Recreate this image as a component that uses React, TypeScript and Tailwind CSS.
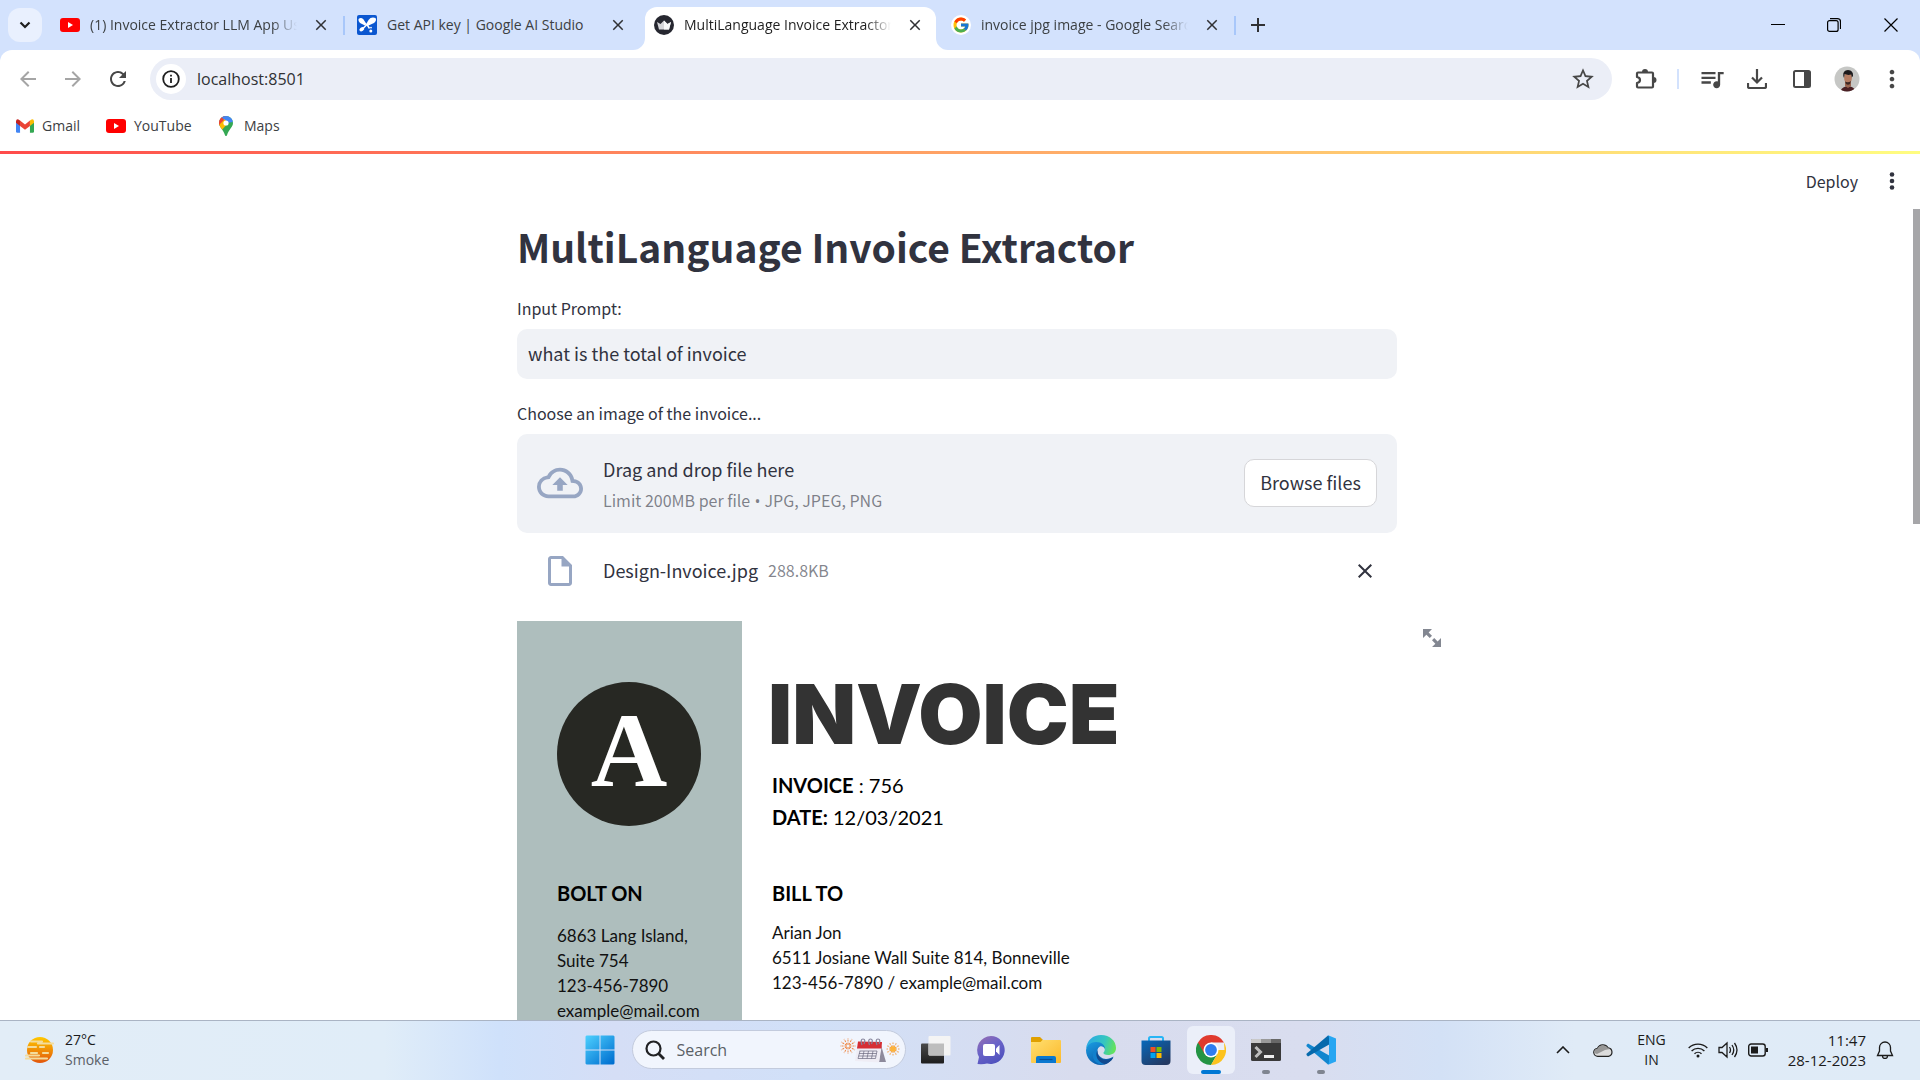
import React from "react";
import {
  MdArrowBack,
  MdArrowForward,
  MdClose,
  MdMoreVert,
  MdOutlineCloudUpload,
  MdOutlineInsertDriveFile,
  MdQueueMusic,
  MdRefresh,
  MdStarBorder,
} from "react-icons/md";
import { FcGoogle } from "react-icons/fc";

const ui = "font-['Open_Sans','Noto_Sans',sans-serif]";
const source = "font-['Noto_Sans_CJK_SC',sans-serif]";

function YouTubeIcon() {
  return (
    <svg viewBox="0 0 20 14" className="h-3.5 w-5 shrink-0" aria-hidden="true">
      <rect width="20" height="14" rx="3" fill="#f00" />
      <path d="M8 4v6l5-3z" fill="#fff" />
    </svg>
  );
}

function StudioIcon() {
  return (
    <svg viewBox="0 0 20 20" className="size-5 shrink-0" aria-hidden="true">
      <rect width="20" height="20" rx="2" fill="#0b57d0" />
      <g fill="#fff">
        <path d="M1.500 4Q4 2 6.500 4.500L9.500 9 8 10.500 3 8Q1 6 1.500 4z" />
        <path d="M18.500 3Q14 1.500 11.500 5L9 9.500l1.500 1.500L17 8Q20 5.500 18.500 3z" />
        <ellipse cx="4.800" cy="14.300" rx="2.600" ry="1.900" transform="rotate(-35 4.800 14.300)" />
        <circle cx="13.800" cy="16" r="1.500" />
        <circle cx="14" cy="12.600" r="0.900" />
      </g>
      <path d="M5 14.500L10 9.500l2.500 4" fill="none" stroke="#fff" strokeWidth="1.500" />
    </svg>
  );
}

function CrownIcon() {
  return (
    <svg viewBox="0 0 20 20" className="size-5 shrink-0" aria-hidden="true">
      <circle cx="10" cy="10" r="10" fill="#262730" />
      <path d="M3 7l3.500 2L10 5.500 13.500 9 17 7l-2 7.500H5z" fill="#d5d5d9" />
      <path d="M10 5.500L13.500 9 17 7l-2 7.500h-5z" fill="#f7f7f8" />
    </svg>
  );
}

function GoogleIcon() {
  return (
    <span className="flex size-5 shrink-0 items-center justify-center rounded-full bg-white">
      <FcGoogle className="size-4.5" />
    </span>
  );
}

const tabs = [
  { title: "(1) Invoice Extractor LLM App Using", icon: <YouTubeIcon />, active: false, line: true },
  { title: "Get API key | Google AI Studio", icon: <StudioIcon />, active: false, line: false },
  { title: "MultiLanguage Invoice Extractor", icon: <CrownIcon />, active: true, line: false },
  { title: "invoice jpg image - Google Search", icon: <GoogleIcon />, active: false, line: true },
];

function TabStrip() {
  return (
    <header className={`flex h-[50px] shrink-0 items-center bg-[#d3e2fd] pl-2 ${ui}`}>
      <button aria-label="Search tabs" className="mr-1.5 flex size-[34px] items-center justify-center rounded-xl bg-[#e9f0fe]">
        <svg viewBox="0 0 12 8" className="h-2 w-3" fill="none" stroke="#1f1f1f" strokeWidth="2.200" aria-hidden="true">
          <path d="M1.500 1.500L6 6l4.500-4.500" />
        </svg>
      </button>
      <div role="tablist" className="flex h-full min-w-0">
        {tabs.map((t) => (
          <div key={t.title} className="relative flex h-full w-[297px] shrink items-center pr-4 pl-3">
            {t.active && (
              <>
                <span className="absolute inset-x-[3px] top-[7px] bottom-0 rounded-t-xl bg-white" />
                <svg viewBox="0 0 12 12" className="absolute bottom-0 -left-[9px] size-3" aria-hidden="true">
                  <path d="M12 0v12H0A12 12 0 0 0 12 0z" fill="#fff" />
                </svg>
                <svg viewBox="0 0 12 12" className="absolute -right-[9px] bottom-0 size-3" aria-hidden="true">
                  <path d="M0 0v12h12A12 12 0 0 1 0 0z" fill="#fff" />
                </svg>
              </>
            )}
            <button role="tab" aria-selected={t.active} className="relative flex min-w-0 flex-1 items-center gap-2.5">
              {t.icon}
              <span
                className={`w-[207px] overflow-hidden text-left text-[14px] leading-5 whitespace-nowrap ${
                  t.title.length > 30 ? "[mask-image:linear-gradient(to_right,black_88%,transparent)]" : ""
                } ${t.active ? "text-[#1f1f1f]" : "text-[#3c4043]"}`}
              >
                {t.title}
              </span>
            </button>
            <button aria-label={`Close ${t.title}`} className="relative ml-3 flex size-4 shrink-0 items-center justify-center text-[#303134]">
              <MdClose className="size-[18px] shrink-0" />
            </button>
            {t.line && <span className="absolute top-4 right-0 h-[19px] w-0.5 bg-[#a8c7fa]" />}
          </div>
        ))}
      </div>
      <button aria-label="New tab" className="ml-2.5 flex size-6 shrink-0 items-center justify-center">
        <svg viewBox="0 0 14 14" className="size-3.5" stroke="#303134" strokeWidth="2" aria-hidden="true">
          <path d="M7 0v14M0 7h14" />
        </svg>
      </button>
      <div className="ml-auto flex h-full shrink-0">
        <button aria-label="Minimize" className="flex w-14 items-center justify-center">
          <svg viewBox="0 0 14 14" className="size-3.5" stroke="#000" aria-hidden="true">
            <path d="M0 6.500h14" />
          </svg>
        </button>
        <button aria-label="Restore" className="flex w-14 items-center justify-center">
          <svg viewBox="0 0 14 14" className="size-3.5" fill="none" stroke="#000" strokeWidth="1.200" aria-hidden="true">
            <rect x="0.600" y="2.600" width="10.500" height="10.800" rx="2" />
            <path d="M3 0.700h7.500a3 3 0 0 1 3 3V11" />
          </svg>
        </button>
        <button aria-label="Close window" className="flex w-[58px] items-center justify-center">
          <svg viewBox="0 0 14 14" className="size-3.5" stroke="#000" strokeWidth="1.200" aria-hidden="true">
            <path d="M.5.5l13 13M13.500.5l-13 13" />
          </svg>
        </button>
      </div>
    </header>
  );
}

function Toolbar() {
  return (
    <div className="bg-[#d3e2fd]">
      <div className={`flex items-center rounded-t-xl bg-white pt-2 pr-3.5 pl-3.5 ${ui}`}>
        <div className="flex gap-[17px] text-[#474747]">
          <button aria-label="Back" className="flex size-7 items-center justify-center text-[#a5a5a5]">
            <MdArrowBack className="size-6" />
          </button>
          <button aria-label="Forward" className="flex size-7 items-center justify-center text-[#a5a5a5]">
            <MdArrowForward className="size-6" />
          </button>
          <button aria-label="Reload" className="flex size-7 items-center justify-center">
            <MdRefresh className="size-6" />
          </button>
        </div>
        <div className="ml-[18px] flex h-[42px] flex-1 items-center rounded-full bg-[#ebeef7] pr-4 pl-1.5">
          <button aria-label="Site information" className="flex size-[30px] items-center justify-center rounded-full bg-white">
            <svg viewBox="0 0 18 18" className="size-[18px]" fill="none" stroke="#1f1f1f" strokeWidth="1.800" aria-hidden="true">
              <circle cx="9" cy="9" r="7.800" />
              <path d="M9 8v5M9 4.800v1.800" />
            </svg>
          </button>
          <input
            aria-label="Address"
            defaultValue="localhost:8501"
            className="ml-[11px] min-w-0 flex-1 bg-transparent text-[16px] text-[#303134] outline-none"
          />
          <button aria-label="Bookmark this tab" className="text-[#474747]">
            <MdStarBorder className="size-[26px]" />
          </button>
        </div>
        <div className="ml-5 flex items-center text-[#474747]">
          <button aria-label="Extensions" className="flex size-7 items-center justify-center">
            <svg viewBox="0 0 22 22" className="size-[22px]" aria-hidden="true">
              <path
                d="M3 4.500h14q1 0 1 1v13q0 1-1 1H3q-1 0-1-1v-3.500q3-.5 3-3t-3-3V5.500q0-1 1-1z"
                fill="none"
                stroke="currentColor"
                strokeWidth="2.200"
                strokeLinejoin="round"
              />
              <path d="M7 4a3 3 0 0 1 6 0zM18.500 9a3 3 0 0 1 0 6z" fill="currentColor" />
            </svg>
          </button>
          <span className="mr-[19px] ml-[17px] h-5 w-0.5 bg-[#d3e2fd]" />
          <div className="flex gap-[17px]">
            <button aria-label="Media controls" className="flex size-7 items-center justify-center">
              <MdQueueMusic className="size-7" />
            </button>
            <button aria-label="Downloads" className="flex size-7 items-center justify-center">
              <svg viewBox="0 0 20 20" className="size-5" fill="none" stroke="currentColor" strokeWidth="2.200" aria-hidden="true">
                <path d="M10 0v13M5 8.500l5 5 5-5M1 14v3.500q0 1.500 1.500 1.500h15q1.500 0 1.500-1.500V14" />
              </svg>
            </button>
            <button aria-label="Side panel" className="flex size-7 items-center justify-center">
              <svg viewBox="0 0 18 18" className="size-[18px]" aria-hidden="true">
                <rect x="1" y="1" width="16" height="16" rx="1.500" fill="none" stroke="currentColor" strokeWidth="2" />
                <path d="M11 1h6v16h-6z" fill="currentColor" />
              </svg>
            </button>
            <button aria-label="Profile" className="flex size-7 items-center justify-center">
              <svg viewBox="0 0 26 26" className="size-[26px]" aria-hidden="true">
                <defs>
                  <clipPath id="avatar">
                    <circle cx="13" cy="13" r="12.500" />
                  </clipPath>
                </defs>
                <g clipPath="url(#avatar)">
                  <rect width="26" height="26" fill="#c6c7c5" />
                  <path d="M6.500 26q0-4 5-5.500h5q5 1.500 5 5.500z" fill="#4a2024" />
                  <path d="M11 15h6v5l-3 2-3-2z" fill="#9a6650" />
                  <ellipse cx="14" cy="12" rx="3.900" ry="6" fill="#b57d63" />
                  <path d="M9.300 10Q8.500 4.500 14 4q5.500.3 5 6l-1.200 1.500-.6-3q-3.400 1-6.500-.4L10 12z" fill="#1c1a1c" />
                  <path d="M11 15.500q3 1.800 6-.5l-1 3q-2 1.500-4 0z" fill="#3c2723" />
                </g>
              </svg>
            </button>
            <button aria-label="Chrome menu" className="flex size-7 items-center justify-center">
              <MdMoreVert className="size-7" />
            </button>
          </div>
        </div>
      </div>
    </div>
  );
}

function GmailIcon() {
  return (
    <svg viewBox="0 0 20 15" className="h-3.5 w-[18px]" aria-hidden="true">
      <path d="M0 2v11.500Q0 15 1.500 15H4.500V5z" fill="#4285f4" />
      <path d="M20 2v11.500q0 1.500-1.500 1.500h-3V5z" fill="#34a853" />
      <path d="M4.500 1.500L10 5.700l5.500-4.200v6L10 11.700 4.500 7.500z" fill="#ea4335" />
      <path d="M0 2.200Q.5-1.200 4 1l.5.400v6L0 4z" fill="#c5221f" />
      <path d="M20 2.200Q19.500-1.200 16 1l-.5.400v6L20 4z" fill="#fbbc04" />
    </svg>
  );
}

function MapsIcon() {
  return (
    <svg viewBox="0 0 14 20" className="h-5 w-3.5" aria-hidden="true">
      <defs>
        <clipPath id="pin">
          <path d="M7 0a7 7 0 0 1 7 7c0 4-4 6-6 12.200Q7 21 6 19.200C4 13 0 11 0 7a7 7 0 0 1 7-7z" />
        </clipPath>
      </defs>
      <g clipPath="url(#pin)">
        <rect width="14" height="20" fill="#34a853" />
        <path d="M0 0h8L0 10z" fill="#ea4335" />
        <path d="M2 1L5-1h9v7L7 7z" fill="#4285f4" />
        <path d="M0 8l5-5 4 4-7 8z" fill="#fbbc04" />
        <path d="M0 0h2l3 4-5 5z" fill="#ea4335" />
      </g>
      <circle cx="7" cy="7" r="2.600" fill="#fff" />
    </svg>
  );
}

function Bookmarks() {
  const link = "flex items-center gap-2";
  return (
    <nav className={`flex h-[51px] shrink-0 items-center bg-white pl-4 text-[14px] text-[#3c4043] ${ui}`}>
      <a href="#gmail" className={`${link} w-[90px]`}>
        <GmailIcon />
        Gmail
      </a>
      <a href="#youtube" className={`${link} w-[113px]`}>
        <YouTubeIcon />
        YouTube
      </a>
      <a href="#maps" className="flex items-center gap-[11px]">
        <MapsIcon />
        Maps
      </a>
    </nav>
  );
}

function InvoiceSheet() {
  return (
    <article className="flex flex-1 font-['Lato',sans-serif] text-[17px] leading-[25px] text-[#111]">
      <section className="w-[225px] shrink-0 bg-[#aebebd] pt-[61px] pl-10">
        <div className="flex size-36 items-center justify-center rounded-full bg-[#272823] pb-1.5 font-['Liberation_Serif',serif] text-[106px] leading-none font-bold text-white">
          A
        </div>
        <h3 className="mt-[53px] text-[20px] leading-7 font-bold text-black">BOLT ON</h3>
        <p className="mt-4 whitespace-nowrap">
          6863 Lang Island,
          <br />
          Suite 754
          <br />
          123-456-7890
          <br />
          example@mail.com
        </p>
      </section>
      <section className="flex-1 bg-white pt-[51px] pl-[30px]">
        <h2 className="-ml-1 font-['Inter',sans-serif] text-[83px] leading-[84px] font-black text-[#333]">INVOICE</h2>
        <p className="mt-[13px] text-[20px] leading-8 text-black">
          <strong>INVOICE</strong> : 756
          <br />
          <strong>DATE:</strong> 12/03/2021
        </p>
        <h3 className="mt-[46px] text-[20px] leading-7 font-bold text-black">BILL TO</h3>
        <p className="mt-[13px]">
          Arian Jon
          <br />
          6511 Josiane Wall Suite 814, Bonneville
          <br />
          123-456-7890 / example@mail.com
        </p>
      </section>
    </article>
  );
}

function StreamlitApp() {
  return (
    <div className={`relative flex min-h-0 flex-1 flex-col overflow-hidden bg-white text-[#31333f] ${source}`}>
      <div className="h-[3px] shrink-0 bg-[linear-gradient(90deg,#ff4b4b,#fffd80)]" />
      <div className="flex h-[53px] shrink-0 items-center justify-end gap-5 pr-3.5">
        <button className="text-[16px] leading-6">Deploy</button>
        <button aria-label="App menu" className="flex size-7 items-center justify-center">
          <svg viewBox="0 0 6 18" className="h-[18px] w-1.5" fill="#31333f" aria-hidden="true">
            <circle cx="3" cy="2.500" r="2.300" />
            <circle cx="3" cy="9" r="2.300" />
            <circle cx="3" cy="15.500" r="2.300" />
          </svg>
        </button>
      </div>
      <main className="flex min-h-0 flex-1 flex-col overflow-hidden pr-1.5">
        <div className="mx-auto flex min-h-0 w-full max-w-[880px] flex-1 flex-col">
          <h1 className="mt-[9px] text-[39px] leading-[60px] font-bold">MultiLanguage Invoice Extractor</h1>
          <label htmlFor="prompt" className="mt-5 text-[16px] leading-6">
            Input Prompt:
          </label>
          <input
            id="prompt"
            defaultValue="what is the total of invoice"
            className="mt-[9px] h-[50px] shrink-0 rounded-[10px] bg-[#f0f2f6] px-[11px] pb-0.5 text-[18px] outline-none"
          />
          <label htmlFor="invoice-file" className="mt-[22px] text-[16px] leading-6">
            Choose an image of the invoice...
          </label>
          <div className="mt-[9px] flex h-[99px] shrink-0 items-center rounded-[10px] bg-[#f0f2f6] px-5 pb-0.5">
            <MdOutlineCloudUpload className="size-[46px] text-[#97a6c3]" />
            <div className="ml-5 flex flex-col pt-[5px]">
              <span className="text-[18px] leading-[30px]">Drag and drop file here</span>
              <small className="text-[16px] leading-8 text-[#31333f]/60">
                Limit 200MB per file<span className="font-['Open_Sans',sans-serif]"> • </span>JPG, JPEG, PNG
              </small>
            </div>
            <input id="invoice-file" type="file" className="sr-only" />
            <button className="ml-auto h-12 w-[133px] rounded-[10px] border border-[#d6d6d9] bg-white text-[18px]">Browse files</button>
          </div>
          <div className="flex h-[88px] shrink-0 items-center px-5 pb-3">
            <span className="flex w-[46px] justify-center">
              <MdOutlineInsertDriveFile className="size-9 text-[#97a6c3]" />
            </span>
            <span className="ml-5 pb-0.5 text-[18px]">Design-Invoice.jpg</span>
            <small className="ml-2.5 pb-0.5 text-[16px] text-[#31333f]/60">288.8KB</small>
            <button aria-label="Remove file" className="ml-auto flex size-6 items-center justify-center">
              <MdClose className="size-6" />
            </button>
          </div>
          <div className="relative flex min-h-0 flex-1">
            <InvoiceSheet />
            <button aria-label="View fullscreen" className="absolute top-2 -right-11 p-0">
              <svg viewBox="0 0 8 8" className="size-[18px]" fill="#838791" aria-hidden="true">
                <path d="M0 0v4l1.500-1.500L3 4l1-1-1.500-1.500L4 0zm5 4L4 5l1.500 1.500L4 8h4V4L6.500 5.500z" />
              </svg>
            </button>
          </div>
        </div>
      </main>
      <span className="absolute top-[58px] right-0 h-[315px] w-[7px] bg-[#a6a6a9]" />
    </div>
  );
}

function WindowsIcon() {
  return (
    <svg viewBox="0 0 30 30" className="size-[30px]" aria-hidden="true">
      <defs>
        <linearGradient id="win" gradientUnits="userSpaceOnUse" x1="0" y1="0" x2="26" y2="30">
          <stop stopColor="#4fd2ff" />
          <stop offset="1" stopColor="#006fd0" />
        </linearGradient>
      </defs>
      <path d="M1.500 0.500h13v14h-14v-13zM15.500 0.500h13l1 1v13h-14zM.5 15.500h14v14h-13l-1-1zM15.500 15.500h14v13l-1 1h-13z" fill="url(#win)" />
    </svg>
  );
}

function TaskViewIcon() {
  return (
    <svg viewBox="0 0 30 30" className="size-[30px]" aria-hidden="true">
      <defs>
        <linearGradient id="tv" x1="0" y1="0" x2="0" y2="1">
          <stop stopColor="#4a4a4a" />
          <stop offset="1" stopColor="#1d1d1d" />
        </linearGradient>
      </defs>
      <rect y="8.500" width="23" height="20" rx="1" fill="url(#tv)" />
      <rect x="7.500" y="1" width="22" height="19.500" rx="1" fill="#f4f4f4" />
      <path d="M7.500 8.500H23v12H8.500l-1-1z" fill="#bdbdbd" />
    </svg>
  );
}

function ChatIcon() {
  return (
    <svg viewBox="0 0 30 30" className="size-[30px]" aria-hidden="true">
      <defs>
        <linearGradient id="chat" x1="0" y1="0" x2=".6" y2="1">
          <stop stopColor="#9a6fb0" />
          <stop offset=".5" stopColor="#6a63c8" />
          <stop offset="1" stopColor="#5052be" />
        </linearGradient>
      </defs>
      <path d="M15 1a14 14 0 1 1-4 27.500q-4 1-9.500.5L3 22A14 14 0 0 1 15 1z" fill="url(#chat)" />
      <rect x="7" y="9" width="12" height="12" rx="2" fill="#fff" />
      <path d="M20 13.500L23.500 10v10L20 16.500z" fill="#fff" />
    </svg>
  );
}

function FolderIcon() {
  return (
    <svg viewBox="0 0 30 30" className="size-[30px]" aria-hidden="true">
      <defs>
        <linearGradient id="folder" x1="0" y1="0" x2="1" y2="1">
          <stop stopColor="#ffdf70" />
          <stop offset="1" stopColor="#fcb92b" />
        </linearGradient>
      </defs>
      <path d="M0 3q0-1 1-1h8l3 3-1 4H0z" fill="#e0a000" />
      <path d="M0 7h9.500l2-2H29q1 0 1 1v21q0 1-1 1H1q-1 0-1-1z" fill="url(#folder)" />
      <path d="M5 28v-5q0-2 2-2h16q2 0 2 2v5z" fill="#0a78d0" />
      <path d="M8.500 24.500h13" stroke="#0a4f96" strokeWidth="1.200" />
    </svg>
  );
}

function EdgeIcon() {
  return (
    <svg viewBox="0 0 30 30" className="size-[30px]" aria-hidden="true">
      <defs>
        <linearGradient id="edgeA" x1="0" y1=".3" x2="1" y2=".5">
          <stop stopColor="#2aa8e6" />
          <stop offset=".6" stopColor="#35c6c0" />
          <stop offset="1" stopColor="#66e35a" />
        </linearGradient>
        <linearGradient id="edgeB" x1="0" y1="0" x2=".6" y2="1">
          <stop stopColor="#1a9de2" />
          <stop offset="1" stopColor="#0b59a8" />
        </linearGradient>
      </defs>
      <path d="M0 14C1 5 7 0 15 0c9 0 15 6 15 13 0 5-4 7-8 7-3 0-5-1-4.500-2.500C21 14 17 9 11 9 5.500 9 1.500 11 0 14z" fill="url(#edgeA)" />
      <path d="M0 15c1-5 5-8 10-8 6 0 9 3.500 9 7-1-2-3-3-5-2.500-5 2-3 12 6 12.500 3 0 5-1 7.500-2.500C25 27 20 30 15 30 6 30 0 23 0 15z" fill="url(#edgeB)" />
      <path d="M13.500 11.700C8 15 10 27 20 29 11 31 6 25 7 19c.5-4 3-6.500 6.500-7.300z" fill="#1280cc" />
      <path d="M11.700 15c-1.500 8 7 13 15.800 7.500-2.500 4-5.500 6-8.500 6.800C11 27 8.500 20 11.700 15z" fill="#124a8f" />
    </svg>
  );
}

function StoreIcon() {
  return (
    <svg viewBox="0 0 30 30" className="size-[30px]" aria-hidden="true">
      <defs>
        <linearGradient id="store" x1="0" y1="0" x2=".7" y2="1">
          <stop stopColor="#0669bb" />
          <stop offset="1" stopColor="#243a63" />
        </linearGradient>
      </defs>
      <path d="M8 6V3.500Q8 2 9.500 2h11Q22 2 22 3.500V6" fill="none" stroke="#27b5f5" strokeWidth="2" />
      <path d="M.5 5.500h29V26q0 4-4 4h-21q-4 0-4-4z" fill="url(#store)" />
      <path d="M9.500 12h5v5h-5z" fill="#f25022" />
      <path d="M15.500 12h5v5h-5z" fill="#7fba00" />
      <path d="M9.500 18h5v5h-5z" fill="#00a4ef" />
      <path d="M15.500 18h5v5h-5z" fill="#ffb900" />
    </svg>
  );
}

function ChromeIcon() {
  return (
    <svg viewBox="0 0 30 30" className="size-[30px]" aria-hidden="true">
      <path d="M15 15L2 7.500A15 15 0 0 0 15 30l6.500-11.300z" fill="#249444" />
      <path d="M15 15h13.500L28 7.500A15 15 0 0 1 15 30l6.500-11.300z" fill="#fcc31e" />
      <path d="M2 7.500A15 15 0 0 1 28 7.500H15L8.500 18.700z" fill="#e03a2e" />
      <circle cx="15" cy="15" r="7.500" fill="#fff" />
      <circle cx="15" cy="15" r="5.900" fill="#2f7df0" />
    </svg>
  );
}

function TerminalIcon() {
  return (
    <svg viewBox="0 0 30 30" className="size-[30px]" aria-hidden="true">
      <rect y="4" width="30" height="22" rx="1.500" fill="#3a3a3a" />
      <path d="M0 8V5q0-1 1-1h9v4z" fill="#c9c9c9" />
      <path d="M10 4h10v4H10z" fill="#999" />
      <path d="M20 4h9q1 0 1 1v3H20z" fill="#686868" />
      <path d="M4.500 12l5 5-5 5" fill="none" stroke="#bdbdbd" strokeWidth="3" />
      <path d="M13 21.500h10" stroke="#efefef" strokeWidth="3" />
    </svg>
  );
}

function CodeIcon() {
  return (
    <svg viewBox="0 0 30 30" className="size-[30px]" aria-hidden="true">
      <path d="M2 8.500L.5 10v1.300L22 29.500l2-1V21z" fill="#1186cf" />
      <path d="M2 21.500L.5 20v-1.300L22 .5l2 1V9z" fill="#0569ac" />
      <path d="M21.500 0L30 3.500v23L21.500 30q1.500-.7 1.500-3V3q0-2.300-1.500-3z" fill="#27a6f2" />
    </svg>
  );
}

const apps = [
  { name: "Task view", icon: <TaskViewIcon />, state: "" },
  { name: "Chat", icon: <ChatIcon />, state: "" },
  { name: "File Explorer", icon: <FolderIcon />, state: "" },
  { name: "Microsoft Edge", icon: <EdgeIcon />, state: "" },
  { name: "Microsoft Store", icon: <StoreIcon />, state: "" },
  { name: "Google Chrome", icon: <ChromeIcon />, state: "active" },
  { name: "Terminal", icon: <TerminalIcon />, state: "open" },
  { name: "Visual Studio Code", icon: <CodeIcon />, state: "open" },
];

function SearchArt() {
  const rays = Array.from({ length: 12 }, (_, i) => i * 30);
  return (
    <svg viewBox="0 0 60 26" className="h-[26px] w-[60px] shrink-0" aria-hidden="true">
      <g stroke="#ee8a4a" strokeWidth="1" strokeDasharray="2 1">
        {rays.map((a) => (
          <path key={a} d="M8 7.500V1" transform={`rotate(${a} 8 9)`} />
        ))}
      </g>
      <g stroke="#f0a050" strokeWidth="1" strokeDasharray="2 1">
        {rays.map((a) => (
          <path key={a} d="M53 10V5.500" transform={`rotate(${a} 53 12)`} />
        ))}
      </g>
      <circle cx="53" cy="12" r="2.800" fill="#fdb43a" />
      <path d="M41 8l5 17h-7z" fill="#8d8a9c" />
      <path d="M17 10.500h24.500L39 25.500l-24-1.500z" fill="#efedf5" />
      <path d="M18 4.500l24 .5-.5 6.500H17z" fill="#d62f34" />
      <path
        d="M19.500 14H37M19 16.500h17.500M18.500 19H36M18 21.500h17.500M20 14l-2 7.500M24 14l-1.500 7.500M28.500 14l-1.500 7.500M33 14l-1.500 7.500M37 14l-1.500 7.500"
        fill="none"
        stroke="#6b6980"
        strokeWidth="0.700"
      />
      <path d="M22 8q-2-6 1-6t1 5M29.500 8q-2-6 1-6t1 5M37 8q-2-6 1-6t1 5" fill="none" stroke="#85839a" strokeWidth="1.200" />
    </svg>
  );
}

function Taskbar() {
  return (
    <footer
      className={`grid h-[60px] shrink-0 grid-cols-[1fr_auto_1fr] items-center border-t border-[#aab4c4] bg-[linear-gradient(90deg,#e2edf7_0%,#e0edf8_20%,#cfe1fb_26%,#d5def6_32%,#d1e0f8_42%,#d8dcee_56%,#d9ddef_68%,#d3e1f6_75%,#e0ebf7_82%,#dfebf7_100%)] pb-0.5 ${ui}`}
    >
      <button className="flex items-center gap-2.5 pl-[25px] text-left text-[14px] leading-5">
        <svg viewBox="0 0 30 28" className="h-7 w-[30px]" aria-hidden="true">
          <defs>
            <linearGradient id="sun" x1="0" y1="0" x2="0" y2="1">
              <stop stopColor="#ffc800" />
              <stop offset="1" stopColor="#e2560c" />
            </linearGradient>
          </defs>
          <circle cx="15" cy="14" r="13" fill="url(#sun)" />
          <path d="M6 5.500h11M13 7.500h15M3 11h8M15 11h4M6 17h6M18 17h5M1 19.500h13M1 22.500h21" stroke="#f3dc9c" strokeWidth="2.200" strokeLinecap="round" />
        </svg>
        <span className="text-[#1b1b1b]">
          27°C
          <br />
          <span className="text-[#5b6067]">Smoke</span>
        </span>
      </button>
      <div className="flex items-center">
        <button aria-label="Start" className="mr-2 flex h-12 w-12 items-center justify-center">
          <WindowsIcon />
        </button>
        <label className="flex h-[39px] w-[274px] items-center rounded-full border border-[#c3cbdd] bg-[#f1f5fd] pr-[5px] pl-3">
          <svg viewBox="0 0 20 20" className="size-5 shrink-0" fill="none" stroke="#202124" strokeWidth="2.200" aria-hidden="true">
            <circle cx="8.500" cy="8.500" r="7" />
            <path d="M13.500 13.500l5.500 5.500" strokeWidth="2.800" />
          </svg>
          <input placeholder="Search" aria-label="Search" className="ml-3 w-0 min-w-0 flex-1 bg-transparent text-[16px] placeholder-[#5a5f66] outline-none" />
          <SearchArt />
        </label>
        <div className="ml-[6px] flex gap-[7px]">
          {apps.map((a) => (
            <button
              key={a.name}
              aria-label={a.name}
              className={`relative flex size-12 items-center justify-center rounded-md ${a.state === "active" ? "bg-[#ebeff9]" : ""}`}
            >
              {a.icon}
              {a.state === "active" && <span className="absolute bottom-0 h-1 w-5 rounded-full bg-[#0078d4]" />}
              {a.state === "open" && <span className="absolute bottom-0 h-1 w-2 rounded-full bg-[#7f8590]" />}
            </button>
          ))}
        </div>
      </div>
      <div className="flex items-center justify-end pr-[26px] text-[14px] leading-5 text-[#1b1b1b]">
        <button aria-label="Show hidden icons" className="mr-[23px]">
          <svg viewBox="0 0 14 8" className="h-2 w-3.5" fill="none" stroke="currentColor" strokeWidth="1.600" aria-hidden="true">
            <path d="M1 7l6-6 6 6" />
          </svg>
        </button>
        <svg viewBox="0 0 20 14" className="mr-6 h-3.5 w-5" aria-hidden="true">
          <path d="M5 13.300a4 4 0 0 1-.5-8A6 6 0 0 1 15 4.800a4.300 4.300 0 0 1 .5 8.500z" fill="#dcdcdc" stroke="#222" strokeWidth="1.200" />
          <path d="M4.500 5.500A6 6 0 0 1 15 5l2 1-5 1-8 4-3-1q0-4 3.500-4.500z" fill="#979797" />
        </svg>
        <span className="mr-[22px] text-center">
          ENG
          <br />
          IN
        </span>
        <svg viewBox="0 0 20 16" className="mr-2.5 h-4 w-5" fill="none" stroke="currentColor" strokeWidth="1.400" aria-hidden="true">
          <path d="M.7 6a13 13 0 0 1 18.600 0M3.600 9a9 9 0 0 1 12.800 0M6.500 11.800a5 5 0 0 1 7 0" />
          <circle cx="10" cy="14" r="1.500" fill="currentColor" stroke="none" />
        </svg>
        <svg viewBox="0 0 20 18" className="mr-2.5 h-[18px] w-5" fill="none" stroke="currentColor" strokeWidth="1.300" aria-hidden="true">
          <path d="M1 6.500h3l5-4.500v14l-5-4.500H1zM11.500 6q2 3 0 6M14 4q3.500 5 0 10M16.500 2q5 7 0 14" />
        </svg>
        <svg viewBox="0 0 20 14" className="mr-5 h-3.5 w-5" aria-hidden="true">
          <rect x=".7" y="1" width="16.500" height="12" rx="2.500" fill="none" stroke="currentColor" strokeWidth="1.400" />
          <rect x="3" y="3.500" width="7" height="7" fill="currentColor" />
          <path d="M18 5h2v4h-2z" fill="currentColor" />
        </svg>
        <span className="mr-2.5 text-right text-[15px]">
          11:47
          <br />
          28-12-2023
        </span>
        <button aria-label="Notifications">
          <svg viewBox="0 0 18 18" className="size-[18px]" fill="none" stroke="currentColor" strokeWidth="1.300" aria-hidden="true">
            <path d="M1.500 14.500L3.500 10V6.500a5.500 5.500 0 0 1 11 0V10l2 4.500zM6.500 15a2.500 2.500 0 0 0 5 0" />
          </svg>
        </button>
      </div>
    </footer>
  );
}

export default function App() {
  return (
    <div className="flex h-screen flex-col overflow-hidden bg-white">
      <TabStrip />
      <Toolbar />
      <Bookmarks />
      <StreamlitApp />
      <Taskbar />
    </div>
  );
}
